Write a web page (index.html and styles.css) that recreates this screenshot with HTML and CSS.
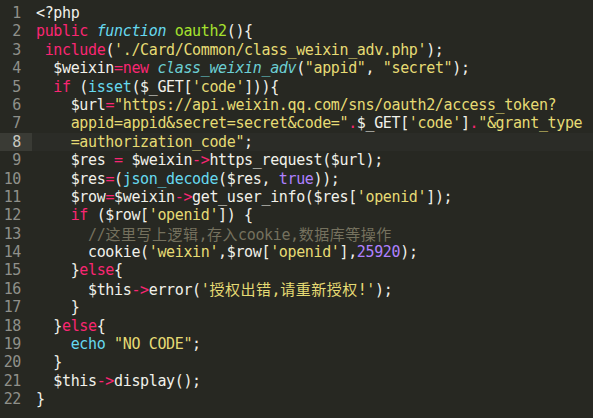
FILE: index.html
```html
<!DOCTYPE html>
<html>
<head>
<meta charset="utf-8">
<link rel="stylesheet" href="styles.css">
</head>
<body>
<div class="editor">
  <div class="line"><span class="ln">1</span><span class="code">&lt;?php</span></div>
  <div class="line"><span class="ln">2</span><span class="code"><span class="k">public</span> <span class="st">function</span> <span class="fn">oauth2</span>(){</span></div>
  <div class="line"><span class="ln">3</span><span class="code"> <span class="k">include</span>(<span class="s">'./Card/Common/class_weixin_adv.php'</span>);</span></div>
  <div class="line"><span class="ln">4</span><span class="code">  $weixin<span class="k">=new</span> <span class="cl">class_weixin_adv</span>(<span class="s">"appid"</span>, <span class="s">"secret"</span>);</span></div>
  <div class="line"><span class="ln">5</span><span class="code">  <span class="k">if</span> (<span class="b">isset</span>($_GET[<span class="s">'code'</span>])){</span></div>
  <div class="line"><span class="ln">6</span><span class="code">    $url<span class="k">=</span><span class="s">"https://api.weixin.qq.com/sns/oauth2/access_token?</span></span></div>
  <div class="line"><span class="ln">7</span><span class="code"><span class="s">    appid=appid&amp;secret=secret&amp;code="</span><span class="k">.</span>$_GET[<span class="s">'code'</span>]<span class="k">.</span><span class="s">"&amp;grant_type</span></span></div>
  <div class="line cur"><span class="ln">8</span><span class="code"><span class="s">    =authorization_code"</span>;</span></div>
  <div class="line"><span class="ln">9</span><span class="code">    $res <span class="k">=</span> $weixin<span class="k">-&gt;</span>https_request($url);</span></div>
  <div class="line"><span class="ln">10</span><span class="code">    $res<span class="k">=</span>(<span class="b">json_decode</span>($res, <span class="n">true</span>));</span></div>
  <div class="line"><span class="ln">11</span><span class="code">    $row<span class="k">=</span>$weixin<span class="k">-&gt;</span>get_user_info($res[<span class="s">'openid'</span>]);</span></div>
  <div class="line"><span class="ln">12</span><span class="code">    <span class="k">if</span> ($row[<span class="s">'openid'</span>]) {</span></div>
  <div class="line"><span class="ln">13</span><span class="code">      <span class="c">//<span class="cjk">这里写上逻辑</span>,<span class="cjk">存入</span>cookie,<span class="cjk">数据库等操作</span></span></span></div>
  <div class="line"><span class="ln">14</span><span class="code">      cookie(<span class="s">'weixin'</span>,$row[<span class="s">'openid'</span>],<span class="n">25920</span>);</span></div>
  <div class="line"><span class="ln">15</span><span class="code">    }<span class="k">else</span>{</span></div>
  <div class="line"><span class="ln">16</span><span class="code">      $this<span class="k">-&gt;</span>error(<span class="s">'<span class="cjk">授权出错</span>,<span class="cjk">请重新授权</span>!'</span>);</span></div>
  <div class="line"><span class="ln">17</span><span class="code">    }</span></div>
  <div class="line"><span class="ln">18</span><span class="code">  }<span class="k">else</span>{</span></div>
  <div class="line"><span class="ln">19</span><span class="code">    <span class="b">echo</span> <span class="s">"NO CODE"</span>;</span></div>
  <div class="line"><span class="ln">20</span><span class="code">  }</span></div>
  <div class="line"><span class="ln">21</span><span class="code">  $this<span class="k">-&gt;</span>display();</span></div>
  <div class="line"><span class="ln">22</span><span class="code">}</span></div>
</div>
</body>
</html>
```
FILE: styles.css
```css
html, body {
  margin: 0;
  padding: 0;
  background: #ffffff;
}
.editor {
  width: 593px;
  height: 418px;
  box-sizing: border-box;
  padding-top: 4px;
  background: #272822;
  font-family: "DejaVu Sans Mono", "Noto Sans CJK SC", monospace;
  font-size: 15px;
  letter-spacing: -0.36px;
  color: #f1f1ea;
}
.line {
  display: flex;
  height: 18.4px;
  line-height: 18.4px;
  white-space: pre;
}
.ln {
  width: 32px;
  flex: none;
  box-sizing: border-box;
  padding-right: 11px;
  text-align: right;
  color: #8f908a;
}
.code {
  padding-left: 4px;
}
.cur {
  background: #2b2c27;
}
.cur .ln {
  background: #3a3b35;
  color: #c8c8c0;
}
.k { color: #f92672; }
.st { color: #66d9ef; font-style: italic; }
.fn { color: #a6e22e; }
.s { color: #e6db74; }
.b { color: #66d9ef; }
.cl { color: #6ccfd4; font-style: italic; }
.n { color: #ae81ff; }
.c { color: #75715e; }
.cjk {
  font-family: "Noto Sans CJK SC", sans-serif;
  letter-spacing: 0.5px;
}
```
